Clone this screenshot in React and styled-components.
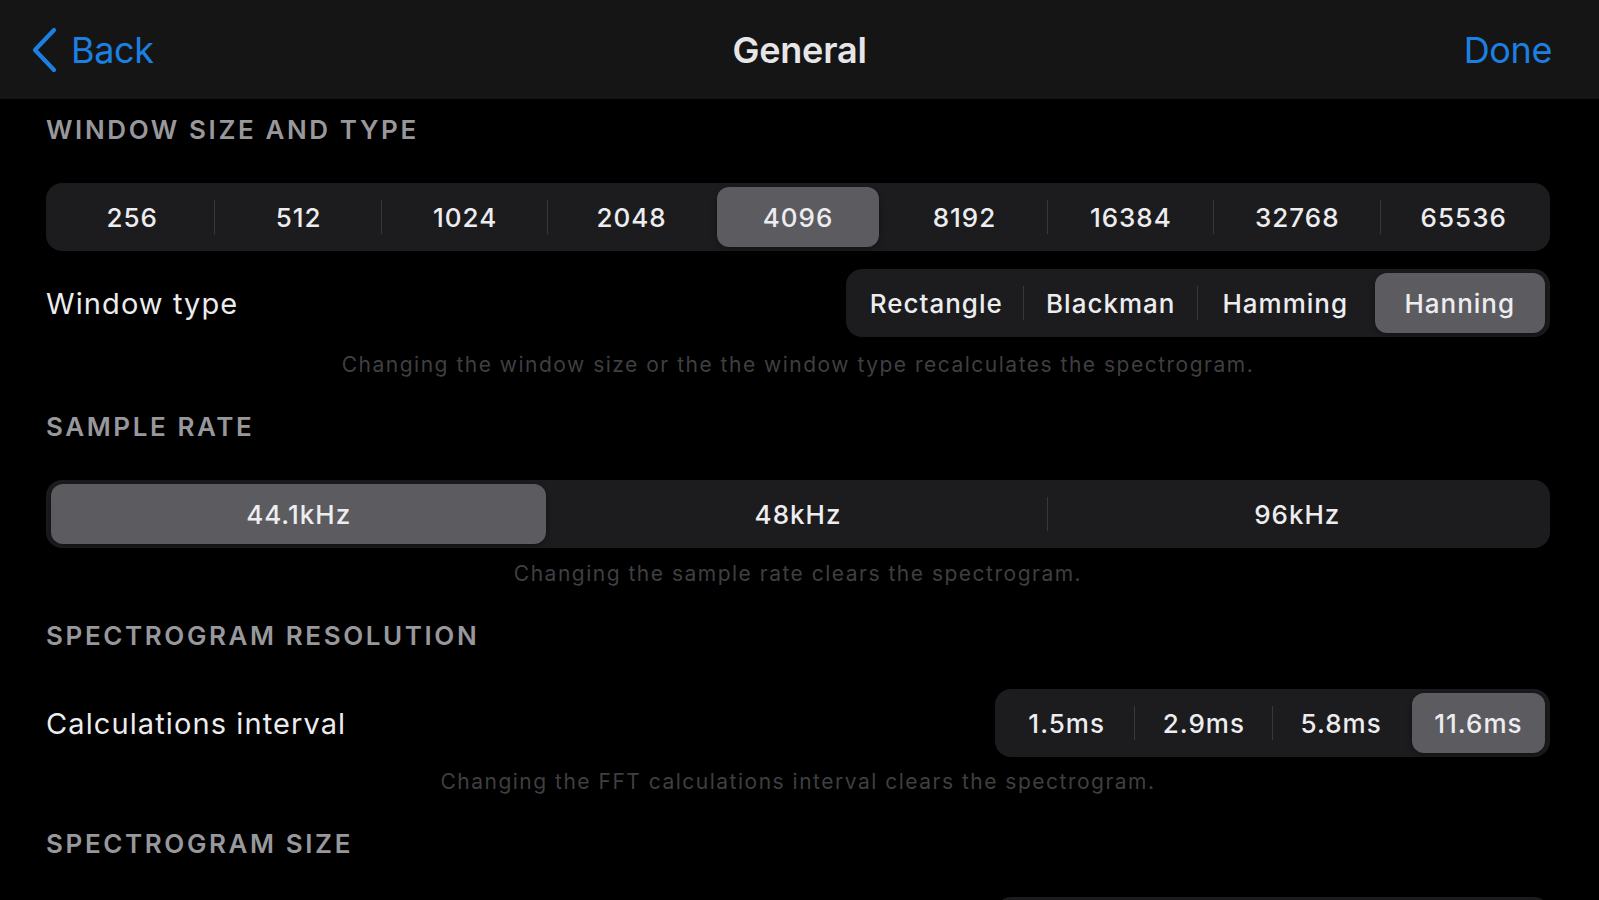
import React from "react";
import styled, { createGlobalStyle } from "styled-components";

const GlobalStyle = createGlobalStyle`
  html, body {
    margin: 0;
    padding: 0;
    background: #000;
    overflow: hidden;
  }
  body {
    font-family: Inter, "Noto Sans", "Liberation Sans", sans-serif;
    color: #e8e8ea;
    -webkit-font-smoothing: antialiased;
  }
  * { box-sizing: border-box; }
`;

const Page = styled.div`
  width: 1599px;
  height: 900px;
  background: #000;
  overflow: hidden;
  display: flex;
  flex-direction: column;
`;

const NavBar = styled.header`
  height: 99px;
  flex: none;
  background: #151515;
  display: grid;
  grid-template-columns: 1fr auto 1fr;
  align-items: center;
  padding: 0 47px;
`;

const NavButton = styled.button`
  justify-self: ${(p) => (p.$end ? "end" : "start")};
  margin-left: ${(p) => (p.$end ? 0 : -17)}px;
  display: flex;
  align-items: center;
  gap: 13px;
  background: none;
  border: none;
  padding: 0;
  color: #1c80e2;
  font-family: inherit;
  font-size: 36px;
  font-weight: 400;
  letter-spacing: -0.4px;
  cursor: pointer;
`;

const Title = styled.h1`
  margin: 0;
  font-size: 36px;
  font-weight: 600;
  color: #e6e6e8;
  letter-spacing: -0.2px;
`;

const Content = styled.main`
  padding: 0 49px 0 46px;
  display: flex;
  flex-direction: column;
`;

const SectionTitle = styled.div`
  margin-top: ${(p) => p.$top ?? 35}px;
  margin-bottom: 38px;
  height: 30px;
  line-height: 30px;
  font-size: 26px;
  font-weight: 600;
  color: #98989c;
  text-transform: uppercase;
  letter-spacing: 2.6px;
`;

const Row = styled.div`
  margin-top: ${(p) => p.$top ?? 0}px;
  display: flex;
  align-items: center;
  justify-content: space-between;
`;

const RowLabel = styled.span`
  font-size: 29px;
  font-weight: 400;
  color: #ececee;
  letter-spacing: 1.1px;
`;

const Footnote = styled.p`
  margin: ${(p) => p.$top ?? 14}px 0 0;
  height: 24px;
  line-height: 24px;
  text-align: center;
  font-size: 21px;
  color: #3f3f41;
  letter-spacing: 1.5px;
`;

const SegTrack = styled.div`
  display: flex;
  align-items: stretch;
  height: 68px;
  padding: 4px 3px;
  border-radius: 16px;
  background: #1c1c1e;
  width: ${(p) => (p.$width ? `${p.$width}px` : "100%")};
  margin-right: ${(p) => p.$right ?? 0}px;
  flex: none;
`;

const Segment = styled.div`
  position: relative;
  flex: 1 1 0;
  display: flex;
  align-items: center;
  justify-content: center;
  margin: 0 2px;
  border-radius: 12px;
  background: ${(p) => (p.$active ? "#5c5c60" : "transparent")};
  box-shadow: ${(p) => (p.$active ? "0 2px 6px rgba(0,0,0,0.35)" : "none")};
  font-size: 26px;
  font-weight: 500;
  color: #ededf0;
  letter-spacing: 1px;
  white-space: nowrap;

  &::before {
    content: "";
    display: ${(p) => (p.$divider ? "block" : "none")};
    position: absolute;
    left: -3px;
    top: 50%;
    width: 1px;
    height: 34px;
    transform: translateY(-50%);
    background: #38383b;
  }
`;

function Segmented({ options, active, width, right }) {
  return (
    <SegTrack $width={width} $right={right}>
      {options.map((o, i) => (
        <Segment
          key={i}
          $active={i === active}
          $divider={i > 0 && i !== active && i - 1 !== active}
        >
          {o}
        </Segment>
      ))}
    </SegTrack>
  );
}

const Chevron = () => (
  <svg width="28" height="46" viewBox="0 0 28 46" fill="none">
    <path
      d="M24 3 L5 23 L24 43"
      stroke="#1c80e2"
      strokeWidth="4.2"
      strokeLinecap="round"
      strokeLinejoin="round"
    />
  </svg>
);

export default function App() {
  return (
    <>
      <GlobalStyle />
      <Page>
        <NavBar>
          <NavButton>
            <Chevron />
            Back
          </NavButton>
          <Title>General</Title>
          <NavButton $end>Done</NavButton>
        </NavBar>
        <Content>
          <SectionTitle $top={16}>Window size and type</SectionTitle>
          <Segmented
            options={["256", "512", "1024", "2048", "4096", "8192", "16384", "32768", "65536"]}
            active={4}
            right={3}
          />
          <Row $top={18}>
            <RowLabel>Window type</RowLabel>
            <Segmented
              options={["Rectangle", "Blackman", "Hamming", "Hanning"]}
              active={3}
              width={704}
            />
          </Row>
          <Footnote $top={16}>
            Changing the window size or the the window type recalculates the spectrogram.
          </Footnote>

          <SectionTitle>Sample rate</SectionTitle>
          <Segmented options={["44.1kHz", "48kHz", "96kHz"]} active={0} />
          <Footnote>Changing the sample rate clears the spectrogram.</Footnote>

          <SectionTitle>Spectrogram resolution</SectionTitle>
          <Row>
            <RowLabel>Calculations interval</RowLabel>
            <Segmented options={["1.5ms", "2.9ms", "5.8ms", "11.6ms"]} active={3} width={555} />
          </Row>
          <Footnote $top={13}>Changing the FFT calculations interval clears the spectrogram.</Footnote>

          <SectionTitle>Spectrogram size</SectionTitle>
          <Row>
            <RowLabel />
            <Segmented options={["", "", "", ""]} active={-1} width={555} />
          </Row>
        </Content>
      </Page>
    </>
  );
}
